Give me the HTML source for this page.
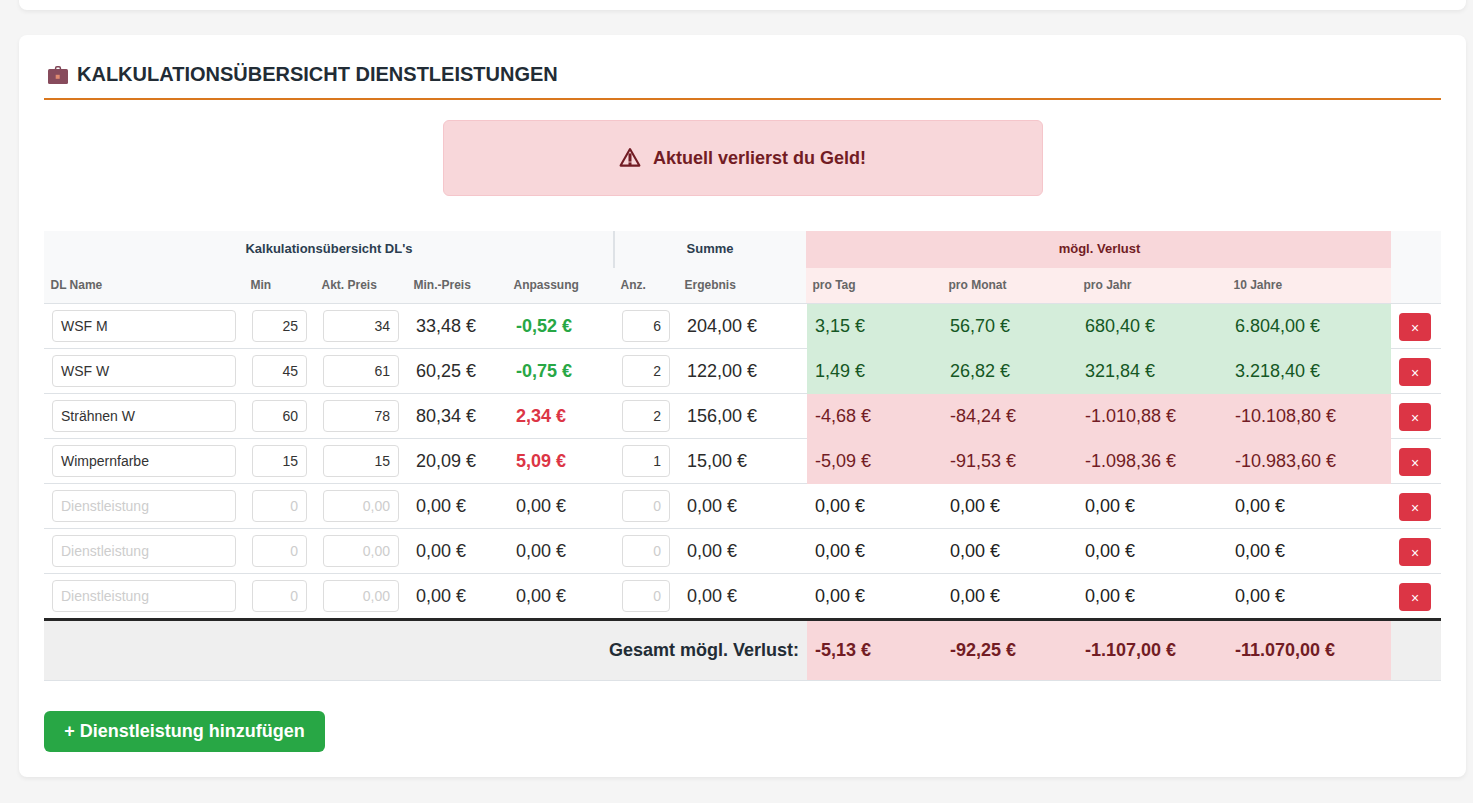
<!DOCTYPE html><html><head><meta charset="utf-8"><title>Kalkulation</title><style>
*{box-sizing:border-box;margin:0;padding:0}
html,body{width:1473px;height:803px;overflow:hidden;background:#f5f5f5;font-family:"Liberation Sans",sans-serif;position:relative}
.abs{position:absolute}
.card{position:absolute;background:#fff;border-radius:8px;box-shadow:0 2px 4px rgba(0,0,0,0.06)}
.h{position:absolute;left:77px;top:62px;font-size:20px;font-weight:700;color:#222c35;line-height:24px;white-space:nowrap}
.line{position:absolute;left:44px;top:98px;width:1397px;height:2px;background:#d9771e}
.alert{position:absolute;left:443px;top:120px;width:600px;height:76px;background:#f8d7da;border:1px solid #f5c6cb;border-radius:6px}
.alert .t{position:absolute;left:209px;top:146px;font-size:18px;font-weight:700;color:#721c24;line-height:22px;white-space:nowrap}
.bg{position:absolute}
.txt{position:absolute;white-space:nowrap}
.th1{font-size:13px;font-weight:700;color:#2c3e50;line-height:16px}
.th1r{font-size:13px;font-weight:700;color:#721c24;line-height:16px}
.th2{font-size:12px;font-weight:700;color:#666;line-height:15px}
.v{font-size:18px;color:#2b2b2b;line-height:22px}
.vb{font-size:18px;font-weight:700;line-height:22px}
.inp{position:absolute;height:32px;background:#fff;border:1px solid #ddd;border-radius:4px;font-size:14px;line-height:30px;color:#333;white-space:nowrap;overflow:hidden}
.inp.l{padding-left:8px}
.inp.r{padding-right:8px;text-align:right}
.inp.ph{color:#cdcdcd}
.del{position:absolute;width:32px;height:28px;background:#dc3545;border-radius:4px;color:#fff;font-size:14px;line-height:30px;text-align:center}
.btn{position:absolute;left:44px;top:711px;width:281px;height:41px;background:#28a745;border-radius:6px;color:#fff;font-size:18px;font-weight:700;line-height:41px;text-align:center;white-space:nowrap}
</style></head><body>
<div class="card" style="left:19px;top:-20px;width:1447px;height:30px"></div>
<div class="card" style="left:19px;top:35px;width:1447px;height:742px"></div>
<svg class="abs" style="left:46px;top:64px" width="24" height="22" viewBox="0 0 24 22">
<path d="M9.6 6 L9.6 4.2 Q9.6 2.8 11 2.8 L13 2.8 Q14.4 2.8 14.4 4.2 L14.4 6" fill="none" stroke="#7e4455" stroke-width="1.5"/>
<rect x="2" y="5" width="20" height="15" rx="1.5" fill="#874b5c"/>
<rect x="9.7" y="10.8" width="4" height="4" fill="#e08a70"/>
</svg>
<div class="h">KALKULATIONSÜBERSICHT DIENSTLEISTUNGEN</div>
<div class="line"></div>
<div class="alert"></div>
<svg class="abs" style="left:618px;top:146px" width="24" height="22" viewBox="0 0 24 22">
<path d="M12 3.1 L21.4 19.6 L2.6 19.6 Z" fill="none" stroke="#721c24" stroke-width="2.1" stroke-linejoin="round"/>
<rect x="10.5" y="7.4" width="3" height="8.2" fill="#721c24"/>
<rect x="10.5" y="16.4" width="3" height="3" fill="#721c24"/>
</svg>
<div class="txt" style="left:653px;top:147px;font-size:18px;font-weight:700;color:#721c24;line-height:22px">Aktuell verlierst du Geld!</div>
<div class="bg" style="left:44px;top:231px;width:762px;height:72px;background:#f8f9fa"></div>
<div class="bg" style="left:1391px;top:231px;width:50px;height:72px;background:#f8f9fa"></div>
<div class="bg" style="left:806px;top:231px;width:585px;height:37px;background:#f8d7da"></div>
<div class="bg" style="left:806px;top:268px;width:585px;height:35px;background:#fdeded"></div>
<div class="bg" style="left:613px;top:231px;width:2px;height:37px;background:#dee2e6"></div>
<div class="bg" style="left:44px;top:303px;width:1397px;height:1px;background:#dee2e6"></div>
<div class="txt th1" style="left:44px;width:570px;text-align:center;top:241px">Kalkulationsübersicht DL's</div>
<div class="txt th1" style="left:614px;width:192px;text-align:center;top:241px">Summe</div>
<div class="txt th1r" style="left:807px;width:585px;text-align:center;top:241px">mögl. Verlust</div>
<div class="txt th2" style="left:50.5px;top:278px">DL Name</div>
<div class="txt th2" style="left:250.5px;top:278px">Min</div>
<div class="txt th2" style="left:321.5px;top:278px">Akt. Preis</div>
<div class="txt th2" style="left:413.5px;top:278px">Min.-Preis</div>
<div class="txt th2" style="left:513.5px;top:278px">Anpassung</div>
<div class="txt th2" style="left:620.5px;top:278px">Anz.</div>
<div class="txt th2" style="left:684.5px;top:278px">Ergebnis</div>
<div class="txt th2" style="left:812.5px;top:278px">pro Tag</div>
<div class="txt th2" style="left:948.5px;top:278px">pro Monat</div>
<div class="txt th2" style="left:1083.5px;top:278px">pro Jahr</div>
<div class="txt th2" style="left:1233.5px;top:278px">10 Jahre</div>
<div class="bg" style="left:44px;top:348px;width:1397px;height:1px;background:#dee2e6"></div>
<div class="bg" style="left:807px;top:304px;width:584px;height:45px;background:#d4edda"></div>
<div class="inp l" style="left:52px;top:310px;width:184px">WSF M</div>
<div class="inp r" style="left:252px;top:310px;width:55px">25</div>
<div class="inp r" style="left:323px;top:310px;width:76px">34</div>
<div class="inp r" style="left:622px;top:310px;width:48px">6</div>
<div class="txt v" style="left:416px;top:315px">33,48 €</div>
<div class="txt vb" style="left:516px;top:315px;color:#28a745">-0,52 €</div>
<div class="txt v" style="left:687px;top:315px">204,00 €</div>
<div class="txt v" style="left:815px;top:315px;color:#155724">3,15 €</div>
<div class="txt v" style="left:950px;top:315px;color:#155724">56,70 €</div>
<div class="txt v" style="left:1085px;top:315px;color:#155724">680,40 €</div>
<div class="txt v" style="left:1235px;top:315px;color:#155724">6.804,00 €</div>
<div class="del" style="left:1399px;top:313px">×</div>
<div class="bg" style="left:44px;top:393px;width:1397px;height:1px;background:#dee2e6"></div>
<div class="bg" style="left:807px;top:349px;width:584px;height:45px;background:#d4edda"></div>
<div class="inp l" style="left:52px;top:355px;width:184px">WSF W</div>
<div class="inp r" style="left:252px;top:355px;width:55px">45</div>
<div class="inp r" style="left:323px;top:355px;width:76px">61</div>
<div class="inp r" style="left:622px;top:355px;width:48px">2</div>
<div class="txt v" style="left:416px;top:360px">60,25 €</div>
<div class="txt vb" style="left:516px;top:360px;color:#28a745">-0,75 €</div>
<div class="txt v" style="left:687px;top:360px">122,00 €</div>
<div class="txt v" style="left:815px;top:360px;color:#155724">1,49 €</div>
<div class="txt v" style="left:950px;top:360px;color:#155724">26,82 €</div>
<div class="txt v" style="left:1085px;top:360px;color:#155724">321,84 €</div>
<div class="txt v" style="left:1235px;top:360px;color:#155724">3.218,40 €</div>
<div class="del" style="left:1399px;top:358px">×</div>
<div class="bg" style="left:44px;top:438px;width:1397px;height:1px;background:#dee2e6"></div>
<div class="bg" style="left:807px;top:394px;width:584px;height:45px;background:#f8d7da"></div>
<div class="inp l" style="left:52px;top:400px;width:184px">Strähnen W</div>
<div class="inp r" style="left:252px;top:400px;width:55px">60</div>
<div class="inp r" style="left:323px;top:400px;width:76px">78</div>
<div class="inp r" style="left:622px;top:400px;width:48px">2</div>
<div class="txt v" style="left:416px;top:405px">80,34 €</div>
<div class="txt vb" style="left:516px;top:405px;color:#dc3545">2,34 €</div>
<div class="txt v" style="left:687px;top:405px">156,00 €</div>
<div class="txt v" style="left:815px;top:405px;color:#721c24">-4,68 €</div>
<div class="txt v" style="left:950px;top:405px;color:#721c24">-84,24 €</div>
<div class="txt v" style="left:1085px;top:405px;color:#721c24">-1.010,88 €</div>
<div class="txt v" style="left:1235px;top:405px;color:#721c24">-10.108,80 €</div>
<div class="del" style="left:1399px;top:403px">×</div>
<div class="bg" style="left:44px;top:483px;width:1397px;height:1px;background:#dee2e6"></div>
<div class="bg" style="left:807px;top:439px;width:584px;height:45px;background:#f8d7da"></div>
<div class="inp l" style="left:52px;top:445px;width:184px">Wimpernfarbe</div>
<div class="inp r" style="left:252px;top:445px;width:55px">15</div>
<div class="inp r" style="left:323px;top:445px;width:76px">15</div>
<div class="inp r" style="left:622px;top:445px;width:48px">1</div>
<div class="txt v" style="left:416px;top:450px">20,09 €</div>
<div class="txt vb" style="left:516px;top:450px;color:#dc3545">5,09 €</div>
<div class="txt v" style="left:687px;top:450px">15,00 €</div>
<div class="txt v" style="left:815px;top:450px;color:#721c24">-5,09 €</div>
<div class="txt v" style="left:950px;top:450px;color:#721c24">-91,53 €</div>
<div class="txt v" style="left:1085px;top:450px;color:#721c24">-1.098,36 €</div>
<div class="txt v" style="left:1235px;top:450px;color:#721c24">-10.983,60 €</div>
<div class="del" style="left:1399px;top:448px">×</div>
<div class="bg" style="left:44px;top:528px;width:1397px;height:1px;background:#dee2e6"></div>
<div class="inp l ph" style="left:52px;top:490px;width:184px">Dienstleistung</div>
<div class="inp r ph" style="left:252px;top:490px;width:55px">0</div>
<div class="inp r ph" style="left:323px;top:490px;width:76px">0,00</div>
<div class="inp r ph" style="left:622px;top:490px;width:48px">0</div>
<div class="txt v" style="left:416px;top:495px">0,00 €</div>
<div class="txt v" style="left:516px;top:495px">0,00 €</div>
<div class="txt v" style="left:687px;top:495px">0,00 €</div>
<div class="txt v" style="left:815px;top:495px;color:#222">0,00 €</div>
<div class="txt v" style="left:950px;top:495px;color:#222">0,00 €</div>
<div class="txt v" style="left:1085px;top:495px;color:#222">0,00 €</div>
<div class="txt v" style="left:1235px;top:495px;color:#222">0,00 €</div>
<div class="del" style="left:1399px;top:493px">×</div>
<div class="bg" style="left:44px;top:573px;width:1397px;height:1px;background:#dee2e6"></div>
<div class="inp l ph" style="left:52px;top:535px;width:184px">Dienstleistung</div>
<div class="inp r ph" style="left:252px;top:535px;width:55px">0</div>
<div class="inp r ph" style="left:323px;top:535px;width:76px">0,00</div>
<div class="inp r ph" style="left:622px;top:535px;width:48px">0</div>
<div class="txt v" style="left:416px;top:540px">0,00 €</div>
<div class="txt v" style="left:516px;top:540px">0,00 €</div>
<div class="txt v" style="left:687px;top:540px">0,00 €</div>
<div class="txt v" style="left:815px;top:540px;color:#222">0,00 €</div>
<div class="txt v" style="left:950px;top:540px;color:#222">0,00 €</div>
<div class="txt v" style="left:1085px;top:540px;color:#222">0,00 €</div>
<div class="txt v" style="left:1235px;top:540px;color:#222">0,00 €</div>
<div class="del" style="left:1399px;top:538px">×</div>
<div class="inp l ph" style="left:52px;top:580px;width:184px">Dienstleistung</div>
<div class="inp r ph" style="left:252px;top:580px;width:55px">0</div>
<div class="inp r ph" style="left:323px;top:580px;width:76px">0,00</div>
<div class="inp r ph" style="left:622px;top:580px;width:48px">0</div>
<div class="txt v" style="left:416px;top:585px">0,00 €</div>
<div class="txt v" style="left:516px;top:585px">0,00 €</div>
<div class="txt v" style="left:687px;top:585px">0,00 €</div>
<div class="txt v" style="left:815px;top:585px;color:#222">0,00 €</div>
<div class="txt v" style="left:950px;top:585px;color:#222">0,00 €</div>
<div class="txt v" style="left:1085px;top:585px;color:#222">0,00 €</div>
<div class="txt v" style="left:1235px;top:585px;color:#222">0,00 €</div>
<div class="del" style="left:1399px;top:583px">×</div>
<div class="bg" style="left:44px;top:618px;width:1397px;height:3px;background:#262626"></div>
<div class="bg" style="left:44px;top:621px;width:1397px;height:59px;background:#efefef"></div>
<div class="bg" style="left:807px;top:621px;width:584px;height:59px;background:#f8d7da"></div>
<div class="bg" style="left:44px;top:680px;width:1397px;height:1px;background:#dee2e6"></div>
<div class="txt vb" style="left:400px;width:399px;text-align:right;top:639px;color:#222c35">Gesamt mögl. Verlust:</div>
<div class="txt vb" style="left:815px;top:639px;color:#721c24">-5,13 €</div>
<div class="txt vb" style="left:950px;top:639px;color:#721c24">-92,25 €</div>
<div class="txt vb" style="left:1085px;top:639px;color:#721c24">-1.107,00 €</div>
<div class="txt vb" style="left:1235px;top:639px;color:#721c24">-11.070,00 €</div>
<div class="btn">+ Dienstleistung hinzufügen</div>
</body></html>
